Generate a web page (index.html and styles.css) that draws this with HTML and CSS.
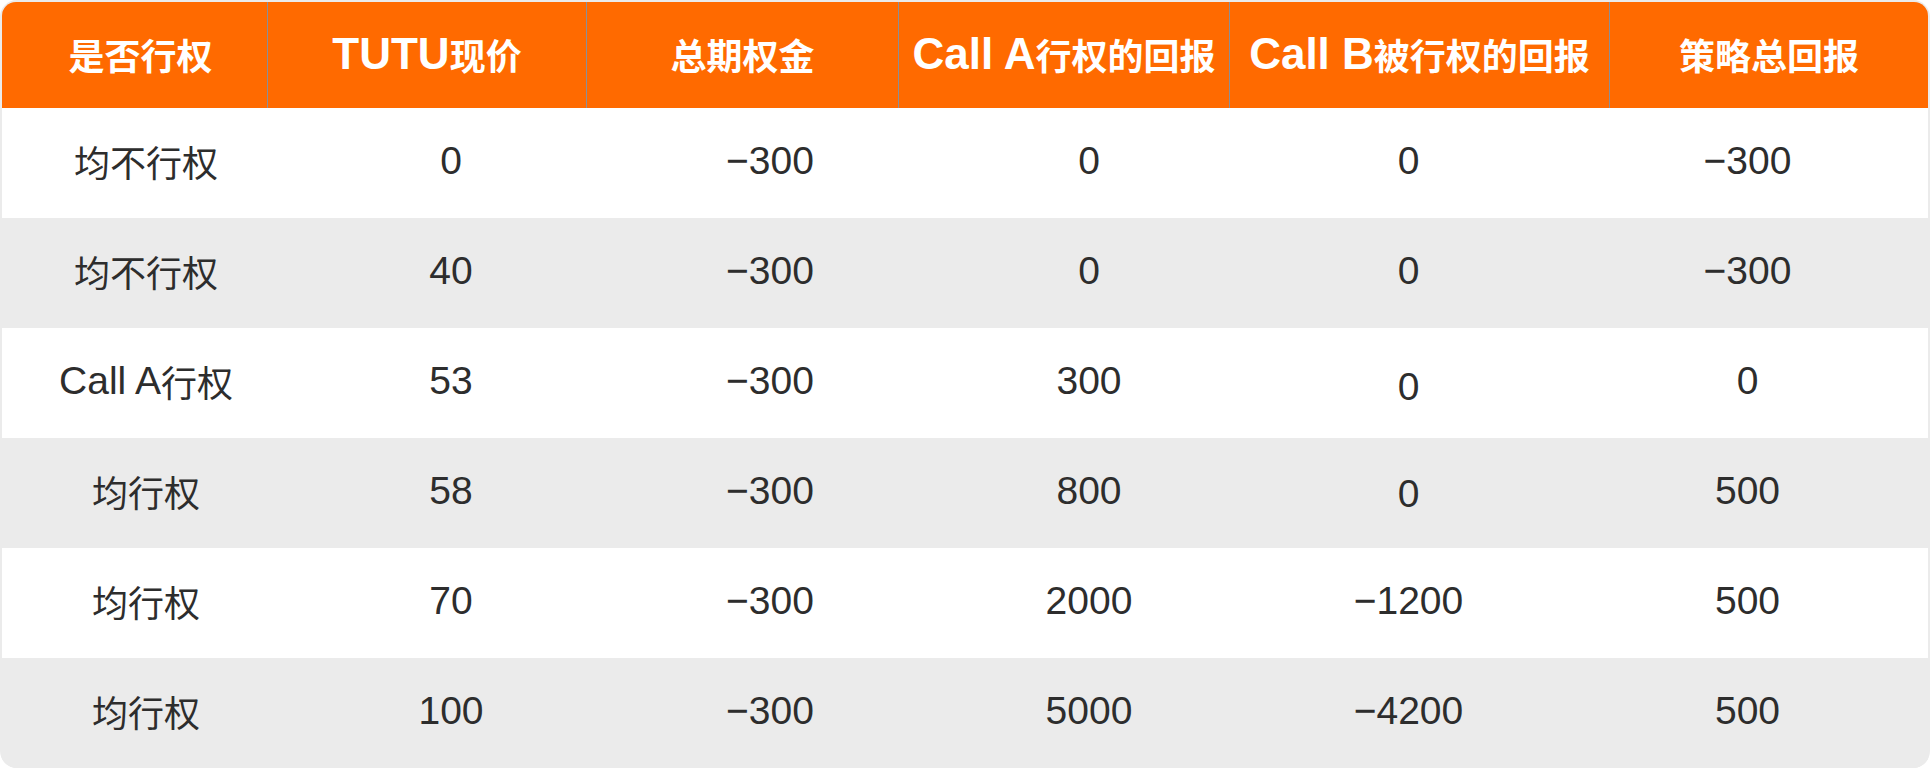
FILE: index.html
```html
<!DOCTYPE html>
<html lang="zh">
<head>
<meta charset="utf-8">
<title>策略回报</title>
<link rel="stylesheet" href="styles.css">
</head>
<body>
<div class="table">
  <div class="head">
    <div class="hcell first"><span class="zh">是否行权</span></div>
    <div class="hcell">TUTU<span class="zh">现价</span></div>
    <div class="hcell"><span class="zh">总期权金</span></div>
    <div class="hcell">Call A<span class="zh">行权的回报</span></div>
    <div class="hcell">Call B<span class="zh">被行权的回报</span></div>
    <div class="hcell"><span class="zh">策略总回报</span></div>
  </div>
  <div class="rows">
    <div class="row">
      <div class="cell"><span class="zh">均不行权</span></div>
      <div class="cell">0</div>
      <div class="cell">−300</div>
      <div class="cell">0</div>
      <div class="cell">0</div>
      <div class="cell">−300</div>
    </div>
    <div class="row">
      <div class="cell"><span class="zh">均不行权</span></div>
      <div class="cell">40</div>
      <div class="cell">−300</div>
      <div class="cell">0</div>
      <div class="cell">0</div>
      <div class="cell">−300</div>
    </div>
    <div class="row">
      <div class="cell">Call A<span class="zh">行权</span></div>
      <div class="cell">53</div>
      <div class="cell">−300</div>
      <div class="cell">300</div>
      <div class="cell low">0</div>
      <div class="cell">0</div>
    </div>
    <div class="row">
      <div class="cell"><span class="zh">均行权</span></div>
      <div class="cell">58</div>
      <div class="cell">−300</div>
      <div class="cell">800</div>
      <div class="cell lower">0</div>
      <div class="cell">500</div>
    </div>
    <div class="row">
      <div class="cell"><span class="zh">均行权</span></div>
      <div class="cell">70</div>
      <div class="cell">−300</div>
      <div class="cell">2000</div>
      <div class="cell">−1200</div>
      <div class="cell">500</div>
    </div>
    <div class="row">
      <div class="cell"><span class="zh">均行权</span></div>
      <div class="cell">100</div>
      <div class="cell">−300</div>
      <div class="cell">5000</div>
      <div class="cell">−4200</div>
      <div class="cell">500</div>
    </div>
  </div>
</div>
</body>
</html>
```

FILE: styles.css
```css
html, body {
  margin: 0;
  padding: 0;
  background: #ffffff;
}

.table {
  width: 1930px;
  height: 768px;
  box-sizing: border-box;
  padding: 2px 2px 0 2px;
  background: #ebebeb;
  border-radius: 17px;
  overflow: hidden;
  display: flex;
  flex-direction: column;
  font-family: "Liberation Sans", "Noto Sans CJK SC", sans-serif;
}

.head {
  display: grid;
  grid-template-columns: 265px 319px 312px 331px 380px 319px;
  height: 106px;
  background: #ff6a00;
  border-radius: 14px 14px 0 0;
}

.hcell {
  display: flex;
  align-items: center;
  justify-content: center;
  box-sizing: border-box;
  color: #ffffff;
  font-weight: bold;
  font-size: 44px;
  white-space: nowrap;
  padding-bottom: 2px;
}

.hcell.first {
  padding-left: 12px;
}

.hcell + .hcell {
  border-left: 1px solid #8a8f99;
}

.hcell .zh {
  font-family: "Noto Sans CJK SC", sans-serif;
  font-size: 36px;
  font-weight: bold;
}

.rows {
  display: flex;
  flex-direction: column;
}

.row {
  display: grid;
  grid-template-columns: 288px 322px 316px 322px 317px 361px;
  height: 110px;
  background: #ffffff;
}

.row:nth-child(even) {
  background: #ebebeb;
}

.cell {
  display: flex;
  align-items: center;
  justify-content: center;
  color: #2d2d2d;
  font-size: 39px;
  white-space: nowrap;
  padding-bottom: 4px;
}

.cell .zh {
  font-family: "Noto Sans CJK SC", sans-serif;
  font-size: 36px;
}

.cell.low {
  padding-bottom: 0;
  padding-top: 8px;
}

.cell.lower {
  padding-bottom: 0;
  padding-top: 2px;
}
```
